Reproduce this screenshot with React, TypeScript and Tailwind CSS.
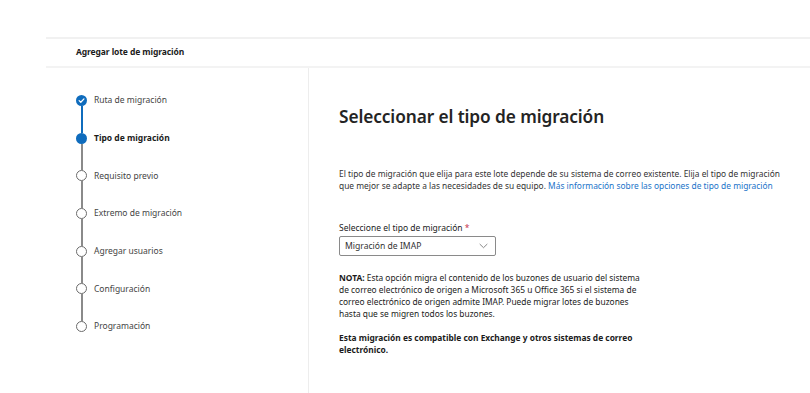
import React from "react";

interface Step {
    label: string;
    state: "done" | "current" | "pending";
}

const steps: Step[] = [
    { label: "Ruta de migración", state: "done" },
    { label: "Tipo de migración", state: "current" },
    { label: "Requisito previo", state: "pending" },
    { label: "Extremo de migración", state: "pending" },
    { label: "Agregar usuarios", state: "pending" },
    { label: "Configuración", state: "pending" },
    { label: "Programación", state: "pending" },
];

const StepCircle: React.FC<{ state: Step["state"] }> = ({ state }) => {
    if (state === "done") {
        return (
            <div className="w-[11px] h-[11px] rounded-full bg-[#0f6cbd] flex items-center justify-center shrink-0">
                <svg width="7" height="7" viewBox="0 0 8 8">
                    <path d="M1.3 4.2 L3.2 6 L6.8 2.2" fill="none" stroke="white" strokeWidth="1.4" strokeLinecap="round" strokeLinejoin="round" />
                </svg>
            </div>
        );
    }
    if (state === "current") {
        return <div className="w-[11px] h-[11px] rounded-full bg-[#0f6cbd] shrink-0" />;
    }
    return <div className="w-[11px] h-[11px] rounded-full border-[1.5px] border-[#6b6b6b] bg-white shrink-0" />;
};

export default function App() {
    return (
        <div className="w-[810px] h-[393px] bg-white overflow-hidden pt-[37px] pl-[46px] font-['Noto_Sans',sans-serif] text-[#242424]">
            <div className="border-t-2 border-[#f1f1f1] h-full flex flex-col">
                {/* Encabezado */}
                <div className="h-[29px] flex items-center pl-[30px] border-b-2 border-[#f3f3f3] shrink-0">
                    <span className="text-[8.5px] font-bold tracking-[-0.1px] text-[#1b1b1b]">Agregar lote de migración</span>
                </div>

                <div className="flex flex-1">
                    {/* Pasos */}
                    <nav className="w-[263px] border-r border-[#ededed] pt-[27px] pl-[30px]">
                        {steps.map((step, i) => (
                            <div key={i} className="flex flex-col">
                                <div className="flex items-center h-[11px]">
                                    <StepCircle state={step.state} />
                                    <span
                                        className={`ml-[7px] text-[8.5px] leading-none whitespace-nowrap ${step.state === "current" ? "font-bold text-[#1b1b1b]" : "text-[#444444]"}`}
                                    >
                                        {step.label}
                                    </span>
                                </div>
                                {i < steps.length - 1 && (
                                    <div
                                        className={`ml-[4.5px] h-[26.7px] w-[2px] ${i === 0 ? "bg-[#0f6cbd]" : "bg-[#8a8a8a]"}`}
                                    />
                                )}
                            </div>
                        ))}
                    </nav>

                    {/* Contenido */}
                    <main className="pl-[30px] pt-[37px]">
                        <h1 className="text-[17.3px] leading-[24px] font-semibold text-[#242424] tracking-[-0.1px]">
                            Seleccionar el tipo de migración
                        </h1>

                        <p className="mt-[39px] text-[8.4px] leading-[12px] text-[#333333] whitespace-nowrap">
                            El tipo de migración que elija para este lote depende de su sistema de correo existente. Elija el tipo de migración
                            <br />
                            que mejor se adapte a las necesidades de su equipo.{" "}
                            <a href="#" className="text-[#1a73c9]">
                                Más información sobre las opciones de tipo de migración
                            </a>
                        </p>

                        <label className="block mt-[30px] text-[8.5px] leading-[12px] text-[#1b1b1b]">
                            Seleccione el tipo de migración <span className="text-[#c4314b]">*</span>
                        </label>
                        <div className="mt-[2px] w-[157px] h-[20px] border border-[#8a8a8a] rounded-[2px] flex items-center justify-between pl-[5px] pr-[7px]">
                            <span className="text-[8.6px] text-[#333333]">Migración de IMAP</span>
                            <svg width="9" height="6" viewBox="0 0 9 6">
                                <path d="M0.7 1 L4.5 4.7 L8.3 1" fill="none" stroke="#7a7a7a" strokeWidth="0.9" />
                            </svg>
                        </div>

                        <p className="mt-[16px] text-[8.4px] leading-[12px] text-[#1b1b1b] whitespace-nowrap">
                            <span className="font-bold">NOTA:</span> Esta opción migra el contenido de los buzones de usuario del sistema
                            <br />
                            de correo electrónico de origen a Microsoft 365 u Office 365 si el sistema de
                            <br />
                            correo electrónico de origen admite IMAP. Puede migrar lotes de buzones
                            <br />
                            hasta que se migren todos los buzones.
                        </p>

                        <p className="mt-[12px] text-[8.4px] leading-[12px] font-bold text-[#1b1b1b] whitespace-nowrap">
                            Esta migración es compatible con Exchange y otros sistemas de correo
                            <br />
                            electrónico.
                        </p>
                    </main>
                </div>
            </div>
        </div>
    );
}
